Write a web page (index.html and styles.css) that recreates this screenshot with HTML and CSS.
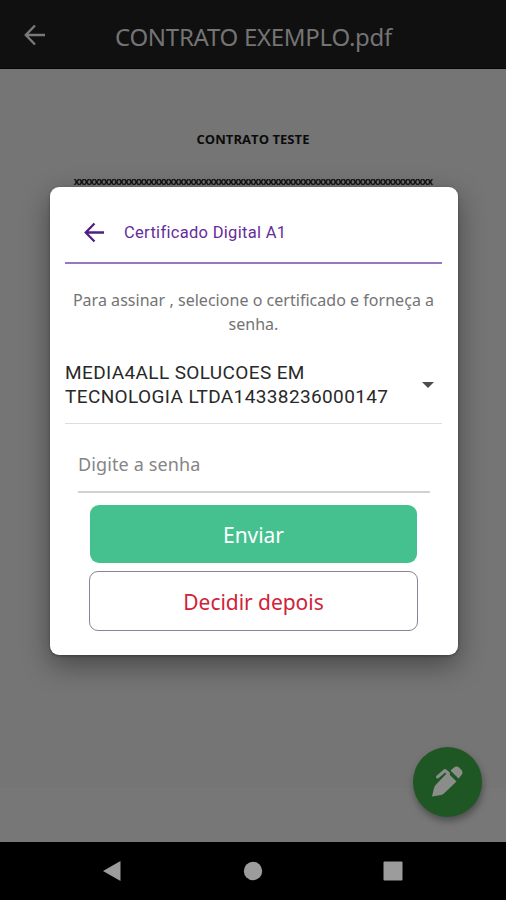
FILE: index.html
```html
<!DOCTYPE html>
<html lang="pt-BR">
<head>
<meta charset="utf-8">
<title>CONTRATO EXEMPLO.pdf</title>
<link rel="stylesheet" href="styles.css">
</head>
<body>
<div class="screen">
  <header class="topbar">
    <svg class="back" viewBox="0 0 22 22"><path d="M21 11H2M11 1.5L1.8 11L11 20.5"/></svg>
    <h1 class="topbar-title">CONTRATO EXEMPLO.pdf</h1>
  </header>
  <main class="document">
    <h2 class="doc-title">CONTRATO TESTE</h2>
    <p class="doc-line">xxxxxxxxxxxxxxxxxxxxxxxxxxxxxxxxxxxxxxxxxxxxxxxxxxxxxxxxxxxxxxxxxxxxxxxx</p>
    <button class="fab" aria-label="Assinar">
      <svg viewBox="0 0 69 70"><path class="pen" d="M19 49.500L21 41Q21.500 39 23.500 37L34.500 25.500L43.500 34.500L32 45.500Q30 47.500 28 48Z"/><path class="pen" d="M37.500 23.500L41 20.500Q43.500 18.500 46 20.500L48.500 23Q50.500 25.500 48.500 28L45.500 31.500Z"/><path class="clip" d="M24.500 30L32 23.500L35.500 26.500"/></svg>
    </button>
  </main>
  <nav class="navbar">
    <svg viewBox="0 0 20 22"><path d="M1 11L18.500 1V21Z"/></svg>
    <svg viewBox="0 0 20 22"><circle cx="10" cy="11" r="9.200"/></svg>
    <svg viewBox="0 0 20 22"><rect x=".5" y="1.500" width="19" height="19" rx="1"/></svg>
  </nav>
  <section class="dialog">
    <div class="dialog-head">
      <svg class="back" viewBox="0 0 22 22"><path d="M21 11H2M11 1.500L1.800 11L11 20.500"/></svg>
      <h2 class="dialog-title">Certificado Digital A1</h2>
    </div>
    <p class="hint">Para assinar , selecione o certificado e forneça a<br>senha.</p>
    <div class="select">
      <div class="select-value">MEDIA4ALL SOLUCOES EM<br>TECNOLOGIA LTDA14338236000147</div>
      <i class="caret"></i>
    </div>
    <div class="password">Digite a senha</div>
    <div class="actions">
      <button class="btn primary">Enviar</button>
      <button class="btn secondary">Decidir depois</button>
    </div>
  </section>
</div>
</body>
</html>
```
FILE: styles.css
```css
* { box-sizing: border-box; margin: 0; padding: 0; }
body { font-family: "Noto Sans", "Open Sans", sans-serif; background: #757575; }
.screen { position: relative; width: 506px; height: 900px; display: flex; flex-direction: column; overflow: hidden; }
.topbar { height: 69px; flex: none; background: #101010; border-bottom: 1px solid #050505; display: flex; align-items: center; padding: 4px 0 0 24px; position: relative; box-shadow: 0 1px 3px rgba(0,0,0,.4); }
.back { width: 22px; height: 22px; fill: none; stroke: #797979; stroke-width: 2.400; flex: none; }
.topbar .back { margin-top: -2px; }
.topbar-title { margin-left: 69px; font-size: 24px; font-weight: 400; color: #747474; white-space: nowrap; letter-spacing: -.28px; }
.document { flex: 1; position: relative; background: linear-gradient(#757575 0 719px, #777 719px); display: flex; flex-direction: column; align-items: center; }
.doc-title { margin-top: 60px; font-family: "Open Sans", sans-serif; font-size: 13px; line-height: 20px; font-weight: 700; color: #0b0b0b; letter-spacing: .05px; white-space: nowrap; }
.doc-line { margin-top: 24px; font-size: 10px; line-height: 16px; font-weight: 700; color: #111; white-space: nowrap; letter-spacing: -.8px; }
.fab { position: absolute; left: 413px; top: 678px; width: 69px; height: 70px; border: 0; border-radius: 50%; background: #1e5724; box-shadow: 1px 4px 7px rgba(0,0,0,.35); }
.fab svg { display: block; width: 69px; height: 70px; }
.pen { fill: #8b8d8b; }
.clip { fill: none; stroke: #8b8d8b; stroke-width: 3; stroke-linejoin: round; stroke-linecap: round; }
.navbar { height: 58px; flex: none; background: #000; display: flex; justify-content: space-between; align-items: center; padding: 0 103px 0 102px; }
.navbar svg { width: 20px; height: 22px; fill: #9c9c9c; }
.dialog { position: absolute; left: 50px; top: 187px; width: 408px; height: 468px; padding: 0 16px 0 15px; background: #fff; border-radius: 9px; box-shadow: 0 10px 28px rgba(0,0,0,.4), 0 1px 3px rgba(0,0,0,.3); }
.dialog-head { height: 77px; padding: 16px 0 0 19px; display: flex; align-items: center; border-bottom: 2px solid #9a76bc; }
.dialog-head .back { width: 21px; height: 21px; stroke: #502080; }
.dialog-title { font-family: Roboto, sans-serif; font-size: 16.500px; font-weight: 400; margin-left: 19px; color: #662c9a; white-space: nowrap; letter-spacing: .3px; }
.hint { margin-top: 24px; text-align: center; font-size: 16px; line-height: 24px; color: #747474; white-space: nowrap; letter-spacing: .03px; }
.select { margin-top: 25px; height: 63px; border-bottom: 1px solid #ddd; display: flex; justify-content: space-between; align-items: flex-start; padding-right: 8px; }
.select-value { font-family: Roboto, sans-serif; font-size: 19px; line-height: 24px; color: #292929; white-space: nowrap; letter-spacing: .38px; }
.caret { margin-top: 21px; border: solid transparent; border-width: 6px 6px 0; border-top-color: #4d4d4d; }
.password { height: 69px; margin: 0 12px 0 13px; padding-top: 27px; border-bottom: 2px solid #d1d3d1; font-size: 18px; line-height: 26px; color: #858585; white-space: nowrap; letter-spacing: .12px; }
.actions { display: flex; flex-direction: column; gap: 8px; margin: 12px 24px 0; }
.btn { height: 58px; padding-top: 2px; border-radius: 9px; border: 0; font-family: inherit; font-size: 21px; line-height: 28px; white-space: nowrap; letter-spacing: -.05px; }
.primary { margin: 0 1px; background: #45c18f; color: #fff; }
.secondary { height: 60px; border: 1px solid #888496; background: #fff; color: #cf2338; }
```
